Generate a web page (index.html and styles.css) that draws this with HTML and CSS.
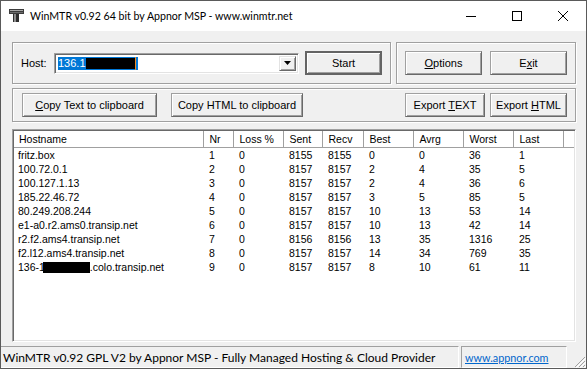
FILE: index.html
```html
<!DOCTYPE html>
<html lang="en">
<head>
  <meta charset="UTF-8">
  <title>WinMTR</title>
  <link rel="stylesheet" href="styles.css">
</head>
<body>
<div class="window">
  <div class="titlebar">
    <svg class="app-icon" width="16" height="16" viewBox="0 0 16 16">
      <rect x="1" y="1" width="15" height="5" fill="#3c3c3c"/>
      <rect x="2" y="2" width="13" height="1" fill="#a8a8a8"/>
      <rect x="2" y="4" width="13" height="1" fill="#6c6c6c"/>
      <rect x="5" y="6" width="6" height="8" fill="#2e2e2e"/>
      <rect x="6" y="6" width="2" height="8" fill="#8c8c8c"/>
    </svg>
    <span class="title">WinMTR v0.92 64 bit by Appnor MSP - www.winmtr.net</span>
    <div class="caption-buttons">
      <span class="cap">
        <svg width="10" height="10" viewBox="0 0 10 10"><path d="M0 5.5h10" stroke="#000" stroke-width="1"/></svg>
      </span>
      <span class="cap">
        <svg width="10" height="10" viewBox="0 0 10 10"><rect x="0.5" y="0.5" width="9" height="9" fill="none" stroke="#000" stroke-width="1"/></svg>
      </span>
      <span class="cap">
        <svg width="10" height="10" viewBox="0 0 10 10"><path d="M0 0L10 10M10 0L0 10" stroke="#000" stroke-width="1"/></svg>
      </span>
    </div>
  </div>

  <div class="client">
    <div class="top-row">
      <div class="group host-group">
        <span class="host-label">Host:</span>
        <div class="combo">
          <div class="combo-field">
            <span class="selection">136.1<span class="redact"></span><span class="sel-tail"></span></span>
          </div>
          <span class="combo-drop">
            <svg width="7" height="4" viewBox="0 0 7 4"><path d="M0 0h7L3.5 4z" fill="#000"/></svg>
          </span>
        </div>
        <button class="btn btn-default start-btn">Start</button>
      </div>
      <div class="group side-group">
        <button class="btn side-btn"><u>O</u>ptions</button>
        <button class="btn side-btn">E<u>x</u>it</button>
      </div>
    </div>

    <div class="group export-group">
      <button class="btn copy-text"><u>C</u>opy Text to clipboard</button>
      <button class="btn copy-html">Copy HTML to clipboard</button>
      <button class="btn export-text">Export <u>T</u>EXT</button>
      <button class="btn export-html">Export <u>H</u>TML</button>
    </div>

    <div class="list">
      <table class="report">
        <colgroup>
          <col class="c-host"><col class="c-nr"><col class="c-loss"><col class="c-sent"><col class="c-recv">
          <col class="c-best"><col class="c-avrg"><col class="c-worst"><col class="c-last"><col>
        </colgroup>
        <thead>
          <tr>
            <th>Hostname</th><th>Nr</th><th>Loss %</th><th>Sent</th><th>Recv</th>
            <th>Best</th><th>Avrg</th><th>Worst</th><th>Last</th><th class="filler"></th>
          </tr>
        </thead>
        <tbody>
          <tr><td>fritz.box</td><td>1</td><td>0</td><td>8155</td><td>8155</td><td>0</td><td>0</td><td>36</td><td>1</td><td></td></tr>
          <tr><td>100.72.0.1</td><td>2</td><td>0</td><td>8157</td><td>8157</td><td>2</td><td>4</td><td>35</td><td>5</td><td></td></tr>
          <tr><td>100.127.1.13</td><td>3</td><td>0</td><td>8157</td><td>8157</td><td>2</td><td>4</td><td>36</td><td>6</td><td></td></tr>
          <tr><td>185.22.46.72</td><td>4</td><td>0</td><td>8157</td><td>8157</td><td>3</td><td>5</td><td>85</td><td>5</td><td></td></tr>
          <tr><td>80.249.208.244</td><td>5</td><td>0</td><td>8157</td><td>8157</td><td>10</td><td>13</td><td>53</td><td>14</td><td></td></tr>
          <tr><td>e1-a0.r2.ams0.transip.net</td><td>6</td><td>0</td><td>8157</td><td>8157</td><td>10</td><td>13</td><td>42</td><td>14</td><td></td></tr>
          <tr><td>r2.f2.ams4.transip.net</td><td>7</td><td>0</td><td>8156</td><td>8156</td><td>13</td><td>35</td><td>1316</td><td>25</td><td></td></tr>
          <tr><td>f2.l12.ams4.transip.net</td><td>8</td><td>0</td><td>8157</td><td>8157</td><td>14</td><td>34</td><td>769</td><td>35</td><td></td></tr>
          <tr><td>136-1<span class="redact-row"></span>.colo.transip.net</td><td>9</td><td>0</td><td>8157</td><td>8157</td><td>8</td><td>10</td><td>61</td><td>11</td><td></td></tr>
        </tbody>
      </table>
    </div>
  </div>

  <div class="statusbar">
    <div class="panel panel-main">WinMTR v0.92 GPL V2 by Appnor MSP - Fully Managed Hosting &amp; Cloud Provider</div>
    <div class="panel panel-link"><a href="#">www.appnor.com</a></div>
    <svg class="grip" width="14" height="14" viewBox="0 0 14 14">
      <path d="M13 3L3 13M13 7L7 13M13 11L11 13" stroke="#a0a0a0" stroke-width="1"/>
      <path d="M14 4L4 14M14 8L8 14M14 12L12 14" stroke="#fff" stroke-width="1"/>
    </svg>
  </div>
</div>
</body>
</html>
```

FILE: styles.css
```css
* {
  margin: 0;
  padding: 0;
  box-sizing: border-box;
}

body {
  font-family: 'Liberation Sans', Arial, sans-serif;
  font-size: 11px;
  color: #000;
  background-color: #fff;
}

.window {
  width: 587px;
  height: 369px;
  border: 1px solid #5a5a5a;
  background-color: #f0f0f0;
  display: flex;
  flex-direction: column;
}

/* barra de título */
.titlebar {
  height: 30px;
  flex-shrink: 0;
  background-color: #fff;
  display: flex;
  align-items: center;
}

.app-icon {
  margin-left: 7px;
}

.title {
  margin-left: 6px;
  font-family: 'Lato', 'Noto Sans', sans-serif;
  font-size: 10.6px;
}

.caption-buttons {
  margin-left: auto;
  height: 100%;
  display: flex;
}

.cap {
  width: 46px;
  display: flex;
  align-items: center;
  justify-content: center;
}

/* área do cliente */
.client {
  flex: 1;
  padding: 11px 10px 0 11px;
  display: flex;
  flex-direction: column;
}

.top-row {
  height: 42px;
  display: flex;
  gap: 5px;
  margin-bottom: 4px;
}

.group {
  border: 1px solid #a0a0a0;
  box-shadow: inset 1px 1px #fff, 1px 1px #fff;
  display: flex;
  align-items: center;
}

.host-group {
  width: 379px;
  padding-left: 8px;
}

.host-label {
  width: 33px;
}

.combo {
  width: 245px;
  height: 21px;
  background-color: #fff;
  border: 1px solid;
  border-color: #a0a0a0 #fff #fff #a0a0a0;
  box-shadow: inset 1px 1px #696969, inset -1px -1px #e3e3e3;
  display: flex;
  padding: 2px;
}

.combo-field {
  flex: 1;
  padding-left: 1px;
  display: flex;
  align-items: center;
}

.selection {
  background-color: #0078d7;
  color: #fff;
  height: 13px;
  line-height: 13px;
  display: inline-flex;
  align-items: center;
}

.redact {
  display: inline-block;
  width: 49px;
  height: 11px;
  background-color: #000;
}

.sel-tail {
  display: inline-block;
  width: 3px;
  height: 13px;
  border-left: 1px solid #f08a24;
}

.combo-drop {
  width: 17px;
  border: 1px solid;
  border-color: #e3e3e3 #696969 #696969 #e3e3e3;
  box-shadow: inset 1px 1px #fff, inset -1px -1px #a0a0a0;
  background-color: #f0f0f0;
  display: flex;
  align-items: center;
  justify-content: center;
}

.btn {
  font-family: inherit;
  font-size: 11px;
  color: #000;
  height: 24px;
  background-color: #f0f0f0;
  border: 1px solid;
  border-color: #a0a0a0 #696969 #696969 #a0a0a0;
  box-shadow: inset 1px 1px #fff, inset -1px -1px #a0a0a0;
}

.btn-default {
  border: 2px solid #646464;
  box-shadow: inset 1px 1px #fff, inset -1px -1px #a0a0a0;
}

.start-btn {
  width: 77px;
  margin-left: 6px;
}

.side-group {
  width: 180px;
  padding-left: 8px;
  gap: 8px;
}

.side-btn {
  width: 77px;
}

.export-group {
  height: 34px;
  padding-left: 9px;
  margin-bottom: 7px;
}

.copy-text {
  width: 135px;
}

.copy-html {
  width: 132px;
  margin-left: 14px;
}

.export-text {
  width: 80px;
  margin-left: auto;
}

.export-html {
  width: 77px;
  margin-left: 5px;
  margin-right: 8px;
}

/* lista de resultados */
.list {
  height: 213px;
  background-color: #fff;
  border: 1px solid;
  border-color: #a0a0a0 #fff #fff #a0a0a0;
  box-shadow: inset 1px 1px #696969, inset -1px -1px #e3e3e3;
  padding: 1px;
  overflow: hidden;
}

.report {
  width: 560px;
  table-layout: fixed;
  border-collapse: collapse;
  font-size: 10.5px;
}

.c-host { width: 189px; }
.c-nr { width: 30px; }
.c-loss { width: 50px; }
.c-sent { width: 39px; }
.c-recv { width: 41px; }
.c-best, .c-avrg, .c-worst, .c-last { width: 50px; }

.report th {
  font-weight: normal;
  text-align: left;
  height: 16px;
  padding-left: 6px;
  border-right: 1px solid #a0a0a0;
  border-bottom: 1px solid #a0a0a0;
  white-space: nowrap;
}

.report th:first-child {
  padding-left: 5px;
}

.report th.filler {
  border-right: none;
}

.report td {
  height: 14px;
  line-height: 14px;
  padding-left: 6px;
  white-space: nowrap;
}

.report td:first-child {
  padding-left: 4px;
}

.redact-row {
  display: inline-block;
  width: 47px;
  height: 11px;
  margin-left: -2px;
  vertical-align: -2px;
  background-color: #000;
}

/* barra de status */
.statusbar {
  height: 24px;
  flex-shrink: 0;
  margin-top: 2px;
  display: flex;
  align-items: flex-end;
  font-family: 'Lato', 'Noto Sans', sans-serif;
  font-size: 12px;
}

.panel {
  height: 22px;
  border: 1px solid;
  border-color: #a0a0a0 #fff #fff #a0a0a0;
  display: flex;
  align-items: center;
  white-space: nowrap;
}

.panel-main {
  width: 458px;
  padding-left: 2px;
  border-left: none;
}

.panel-link {
  width: 106px;
  margin-left: 2px;
  padding-left: 3px;
  font-size: 10.8px;
}

.panel-link a {
  color: #0066cc;
}

.grip {
  margin-left: auto;
}
```
